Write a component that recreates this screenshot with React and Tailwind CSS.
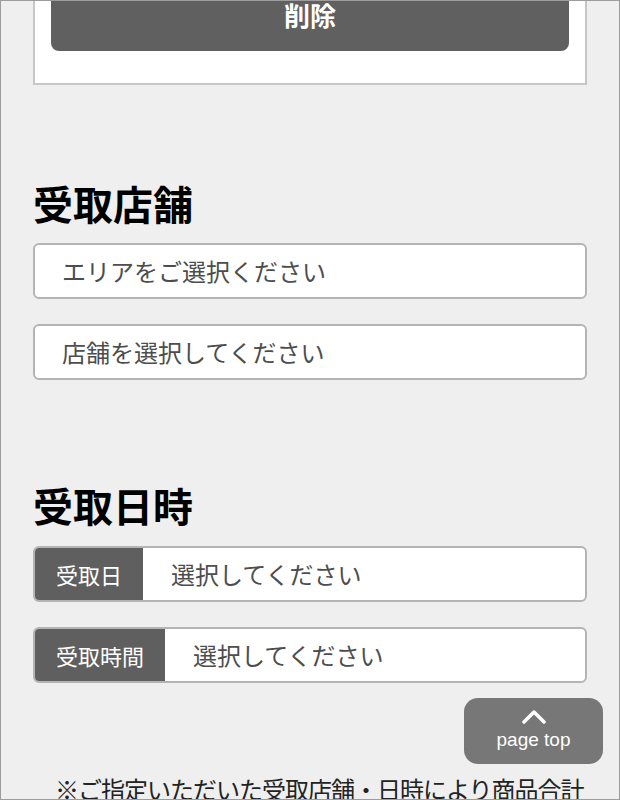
const jp = { fontFamily: '"Noto Sans CJK JP", "Noto Sans", sans-serif' }

const SelectBox = ({ text }) => (
    <div className="flex h-[56px] items-center rounded-[6px] border-2 border-[#b4b4b4] bg-white pl-[27px] text-[24px] leading-none text-[#4d4d4d]">
        {text}
    </div>
)

const LabeledBox = ({ label, text }) => (
    <div className="flex h-[56px] items-stretch overflow-hidden rounded-[6px] border-2 border-[#b4b4b4] bg-white">
        <div className="flex items-center bg-[#5f5f5f] px-[21px] text-[22px] leading-none text-white">
            {label}
        </div>
        <div className="flex items-center pl-[28px] text-[24px] leading-none text-[#4d4d4d]">
            {text}
        </div>
    </div>
)

const App = () => {
    return (
        <div
            style={jp}
            className="relative h-[800px] w-[620px] overflow-hidden border border-[#9c9c9c] bg-[#efefef]">
            <div className="px-[32px]">
                <div className="-mt-[40px] border-2 border-[#c6c6c6] bg-white px-[16px] pb-[32px] pt-[16px]">
                    <button className="flex h-[72px] w-full items-center justify-center rounded-[8px] bg-[#606060] text-[26px] font-bold leading-none text-white">
                        削除
                    </button>
                </div>

                <h2 className="mt-[98px] text-[40px] font-bold leading-none text-black">
                    受取店舗
                </h2>
                <div className="mt-[20px] flex flex-col gap-[25px]">
                    <SelectBox text="エリアをご選択ください" />
                    <SelectBox text="店舗を選択してください" />
                </div>

                <h2 className="mt-[105px] text-[40px] font-bold leading-none text-black">
                    受取日時
                </h2>
                <div className="mt-[21px] flex flex-col gap-[25px]">
                    <LabeledBox label="受取日" text="選択してください" />
                    <LabeledBox label="受取時間" text="選択してください" />
                </div>

                <p className="mt-[94px] whitespace-nowrap pl-[22px] text-[24px] leading-none tracking-[-1px] text-[#222]">
                    ※ご指定いただいた受取店舗・日時により商品合計
                </p>
            </div>

            <a
                href="#"
                className="absolute right-[16px] top-[697px] flex h-[66px] w-[139px] flex-col items-center rounded-[14px] bg-[#777777] pt-[10px] text-white">
                <svg width="26" height="16" viewBox="0 0 26 16" fill="none">
                    <polyline
                        points="3,14 13,4 23,14"
                        stroke="white"
                        strokeWidth="3.5"
                        strokeLinecap="round"
                        strokeLinejoin="round"
                    />
                </svg>
                <span
                    className="mt-[6px] text-[19px] leading-none"
                    style={{ fontFamily: '"Liberation Sans", "Helvetica", sans-serif' }}>
                    page top
                </span>
            </a>
        </div>
    )
}

export default App
